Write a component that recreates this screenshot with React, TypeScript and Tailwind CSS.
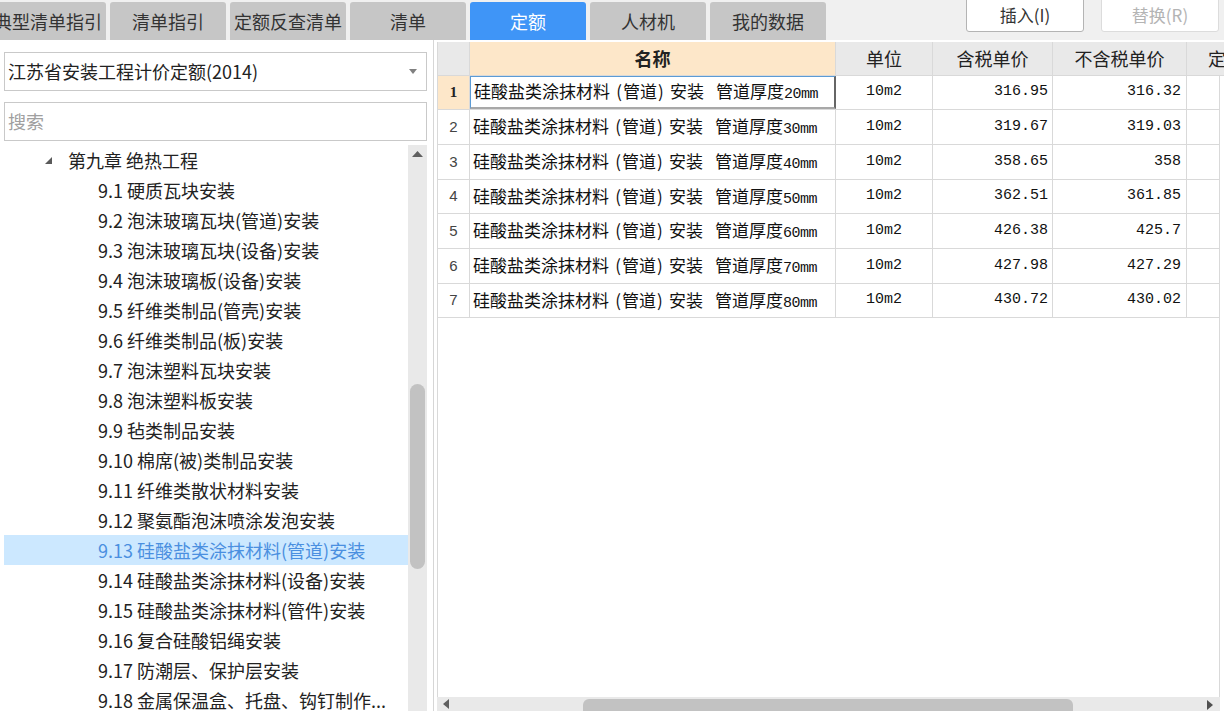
import React from 'react';

const TABS = ['典型清单指引', '清单指引', '定额反查清单', '清单', '定额', '人材机', '我的数据'];

const TREE = [
  '9.1 硬质瓦块安装',
  '9.2 泡沫玻璃瓦块(管道)安装',
  '9.3 泡沫玻璃瓦块(设备)安装',
  '9.4 泡沫玻璃板(设备)安装',
  '9.5 纤维类制品(管壳)安装',
  '9.6 纤维类制品(板)安装',
  '9.7 泡沫塑料瓦块安装',
  '9.8 泡沫塑料板安装',
  '9.9 毡类制品安装',
  '9.10 棉席(被)类制品安装',
  '9.11 纤维类散状材料安装',
  '9.12 聚氨酯泡沫喷涂发泡安装',
  '9.13 硅酸盐类涂抹材料(管道)安装',
  '9.14 硅酸盐类涂抹材料(设备)安装',
  '9.15 硅酸盐类涂抹材料(管件)安装',
  '9.16 复合硅酸铝绳安装',
  '9.17 防潮层、保护层安装',
  '9.18 金属保温盒、托盘、钩钉制作...',
];

const ROWS = [
  { mm: '20', tax: '316.95', net: '316.32' },
  { mm: '30', tax: '319.67', net: '319.03' },
  { mm: '40', tax: '358.65', net: '358' },
  { mm: '50', tax: '362.51', net: '361.85' },
  { mm: '60', tax: '426.38', net: '425.7' },
  { mm: '70', tax: '427.98', net: '427.29' },
  { mm: '80', tax: '430.72', net: '430.02' },
];

const cjk = "font-['Noto_Sans_CJK_SC',sans-serif]";
const mono = "font-['Liberation_Mono','Noto_Sans_CJK_SC',monospace]";

function TopBar() {
  return (
    <div className="flex h-[40px] shrink-0 bg-[#f0f0f0]">
      <div className="ml-[-10px] flex items-end gap-1">
        {TABS.map(t => (
          <div key={t}
            className={'flex h-[38px] w-[116px] items-center justify-center rounded-t-[3px] text-[18px] '
              + (t === '定额' ? 'bg-[#3f95f7] text-white' : 'bg-[#c6c6c6] text-[#333]')}>
            {t}
          </div>
        ))}
      </div>
      <div className="ml-auto mr-[5px] flex items-start gap-[17px]">
        <div className="-mt-[2px] flex h-[34px] w-[118px] items-center justify-center rounded-b-[3px] border border-[#b4b4b4] bg-white text-[17px] text-[#333]">
          插入(I)
        </div>
        <div className="-mt-[2px] flex h-[34px] w-[118px] items-center justify-center rounded-b-[3px] border border-[#dcdcdc] bg-white text-[17px] text-[#b4b4b4]">
          替换(R)
        </div>
      </div>
    </div>
  );
}

function LeftPanel() {
  return (
    <div className="flex w-[434px] shrink-0 flex-col border-r border-[#d6d6d6] bg-white pl-[4px] pr-[6px]">
      <div className="mt-[12px] flex h-[39px] items-center justify-between border border-[#c9c9c9] pl-[3px] pr-[9px] text-[18px] text-[#222]">
        <span>江苏省安装工程计价定额(2014)</span>
        <svg width="8" height="5" viewBox="0 0 8 5"><polygon points="0,0 8,0 4,5" fill="#808080" /></svg>
      </div>
      <div className="mt-[11px] flex h-[39px] items-center border border-[#c9c9c9] pl-[3px] text-[18px] text-[#a0a0a0]">
        搜索
      </div>
      <div className="mt-[4px] flex min-h-0 flex-1 overflow-hidden">
        <div className="flex-1">
          <div className="flex h-[30px] items-center text-[18px] text-[#222]">
            <svg className="ml-[41px] mr-[16px]" width="7" height="7" viewBox="0 0 7 7">
              <polygon points="7,0 7,7 0,7" fill="#5a5a5a" />
            </svg>
            第九章 绝热工程
          </div>
          {TREE.map(t => (
            <div key={t}
              className={'flex h-[30px] items-center whitespace-nowrap pl-[94px] text-[18px] '
                + (t.startsWith('9.13 ') ? 'bg-[#cce8ff] text-[#4a8fe0]' : 'text-[#222]')}>
              {t}
            </div>
          ))}
        </div>
        <div className="flex w-[19px] shrink-0 flex-col items-center bg-[#e9e9e9]">
          <svg className="mt-[6px]" width="11" height="6" viewBox="0 0 11 6">
            <polygon points="5.5,0 11,6 0,6" fill="#606060" />
          </svg>
          <div className="mt-[227px] h-[185px] w-[15px] rounded-[8px] bg-[#c2c2c2]" />
        </div>
      </div>
    </div>
  );
}

function NameCell({ mm, sel }: { mm: string; sel: boolean }) {
  return (
    <div className={'flex w-[366px] shrink-0 items-center whitespace-nowrap pl-[3px] text-[17px] ' + cjk + ' '
      + (sel ? 'border-b-2 border-l border-r-2 border-t border-b-[#a8a8a8] border-l-[#5b9bd5] border-r-[#666] border-t-[#5b9bd5]'
        : 'border-r border-[#d9d9d9]')}>
      <span className="leading-none">
        硅酸盐类涂抹材料
        <span className="inline-block w-[13px] pr-[1px] text-right">(</span>
        管道
        <span className="inline-block w-[13px] pl-[1px] text-left">)</span>
        安装
        <span className="inline-block w-[12px]" />
        管道厚度
        <span className={mono + ' text-[15px] tracking-[-0.5px]'}>{mm}mm</span>
      </span>
    </div>
  );
}

function Table() {
  return (
    <div className="flex min-w-0 flex-1 flex-col overflow-hidden bg-white pl-[3px] pt-[2px]">
      <div className={'flex h-[34px] shrink-0 border-b border-l border-[#d9d9d9] text-[18px] text-[#222] ' + cjk}>
        <div className="w-[32px] shrink-0 border-r border-[#d9d9d9] bg-[#e9e9e9]" />
        <div className="flex w-[366px] shrink-0 items-center justify-center border-r border-[#d9d9d9] bg-[#fde7c9] font-bold">名称</div>
        <div className="flex w-[97px] shrink-0 items-center justify-center border-r border-[#d9d9d9] bg-[#e9e9e9]">单位</div>
        <div className="flex w-[120px] shrink-0 items-center justify-center border-r border-[#d9d9d9] bg-[#e9e9e9]">含税单价</div>
        <div className="flex w-[134px] shrink-0 items-center justify-center border-r border-[#d9d9d9] bg-[#e9e9e9]">不含税单价</div>
        <div className="flex flex-1 items-center whitespace-nowrap bg-[#e9e9e9] pl-[21px]">定额号</div>
      </div>
      <div className="flex min-h-0 w-[783px] flex-1 flex-col border-l border-r border-[#d9d9d9]">
        {ROWS.map((r, i) => {
          const sel = i === 0;
          return (
            <div key={r.mm}
              className={'flex shrink-0 border-b border-[#d9d9d9] text-[#111] '
                + (i === 0 || i === 3 || i === 6 ? 'h-[34px]' : 'h-[35px]')}>
              <div className={'flex w-[32px] shrink-0 items-center justify-center border-r border-[#d9d9d9] '
                + (sel ? "bg-[#fde7c9] font-['Liberation_Serif',serif] text-[15px] font-bold text-[#222]"
                  : "font-['Liberation_Sans',sans-serif] text-[15px] text-[#444]")}>
                {i + 1}
              </div>
              <NameCell mm={r.mm} sel={sel} />
              <div className={'flex w-[97px] shrink-0 items-center justify-center border-r border-[#d9d9d9] text-[15px] ' + mono}>10m2</div>
              <div className={'flex w-[120px] shrink-0 items-center justify-end border-r border-[#d9d9d9] pr-[4px] text-[15px] ' + mono}>{r.tax}</div>
              <div className={'flex w-[134px] shrink-0 items-center justify-end border-r border-[#d9d9d9] pr-[5px] text-[15px] ' + mono}>{r.net}</div>
              <div className="flex-1" />
            </div>
          );
        })}
      </div>
      <div className="flex h-[14px] w-[783px] shrink-0 items-end bg-[#e9e9e9]">
        <svg className="mb-[2px] ml-[6px]" width="6" height="10" viewBox="0 0 6 10">
          <polygon points="6,0 6,10 0,5" fill="#606060" />
        </svg>
        <div className="ml-[134px] h-[12px] w-[490px] rounded-t-[6px] bg-[#c2c2c2]" />
        <svg className="mb-[1px] ml-auto mr-[7px]" width="6" height="10" viewBox="0 0 6 10">
          <polygon points="0,0 6,5 0,10" fill="#505050" />
        </svg>
      </div>
    </div>
  );
}

export default function App() {
  return (
    <div className={'flex h-[711px] w-[1224px] flex-col overflow-hidden bg-white ' + cjk}>
      <TopBar />
      <div className="flex min-h-0 flex-1">
        <LeftPanel />
        <Table />
      </div>
    </div>
  );
}
